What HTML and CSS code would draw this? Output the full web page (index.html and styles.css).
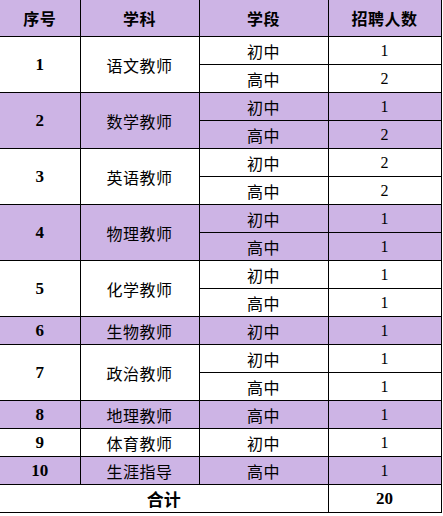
FILE: index.html
```html
<!DOCTYPE html>
<html lang="zh">
<head>
<meta charset="utf-8">
<link rel="stylesheet" href="styles.css">
</head>
<body>
<table class="recruit">
  <colgroup>
    <col class="c-no">
    <col class="c-subj">
    <col class="c-stage">
    <col class="c-count">
  </colgroup>
  <thead>
    <tr class="head">
      <th>序号</th><th>学科</th><th>学段</th><th>招聘人数</th>
    </tr>
  </thead>
  <tbody>
    <tr class="w"><td class="no" rowspan="2">1</td><td class="subj" rowspan="2">语文教师</td><td class="stage">初中</td><td class="num">1</td></tr>
    <tr class="w"><td class="stage">高中</td><td class="num">2</td></tr>
    <tr class="p"><td class="no" rowspan="2">2</td><td class="subj" rowspan="2">数学教师</td><td class="stage">初中</td><td class="num">1</td></tr>
    <tr class="p"><td class="stage">高中</td><td class="num">2</td></tr>
    <tr class="w"><td class="no" rowspan="2">3</td><td class="subj" rowspan="2">英语教师</td><td class="stage">初中</td><td class="num">2</td></tr>
    <tr class="w"><td class="stage">高中</td><td class="num">2</td></tr>
    <tr class="p"><td class="no" rowspan="2">4</td><td class="subj" rowspan="2">物理教师</td><td class="stage">初中</td><td class="num">1</td></tr>
    <tr class="p"><td class="stage">高中</td><td class="num">1</td></tr>
    <tr class="w"><td class="no" rowspan="2">5</td><td class="subj" rowspan="2">化学教师</td><td class="stage">初中</td><td class="num">1</td></tr>
    <tr class="w"><td class="stage">高中</td><td class="num">1</td></tr>
    <tr class="p"><td class="no">6</td><td class="subj">生物教师</td><td class="stage">初中</td><td class="num">1</td></tr>
    <tr class="w"><td class="no" rowspan="2">7</td><td class="subj" rowspan="2">政治教师</td><td class="stage">初中</td><td class="num">1</td></tr>
    <tr class="w"><td class="stage">高中</td><td class="num">1</td></tr>
    <tr class="p"><td class="no">8</td><td class="subj">地理教师</td><td class="stage">高中</td><td class="num">1</td></tr>
    <tr class="w"><td class="no">9</td><td class="subj">体育教师</td><td class="stage">初中</td><td class="num">1</td></tr>
    <tr class="p"><td class="no">10</td><td class="subj">生涯指导</td><td class="stage">高中</td><td class="num">1</td></tr>
    <tr class="w total"><td class="sum-label" colspan="3">合计</td><td class="sum">20</td></tr>
  </tbody>
</table>
</body>
</html>
```
FILE: styles.css
```css
html, body {
  margin: 0;
  padding: 0;
  background: #ffffff;
}

.recruit {
  border-collapse: collapse;
  table-layout: fixed;
  width: 441px;
  color: #000;
  font-family: "Noto Sans CJK SC", "Noto Sans", sans-serif;
  font-size: 16px;
}

.c-no { width: 80px; }
.c-subj { width: 119px; }
.c-stage { width: 129px; }
.c-count { width: 113px; }

.recruit th,
.recruit td {
  border: 1px solid #000;
  padding: 0;
  text-align: center;
  vertical-align: middle;
  line-height: 20px;
}

.recruit tr > :first-child {
  border-left: none;
}

.head th {
  border-top: none;
  height: 36px;
  background: #cdb4e5;
  font-weight: bold;
  font-size: 16px;
  letter-spacing: 0.5px;
}

.recruit tbody tr {
  height: 28px;
}

.p td {
  background: #cdb4e5;
}

.w td {
  background: #ffffff;
}

.no {
  font-family: "Liberation Serif", serif;
  font-weight: bold;
  font-size: 17px;
}

.num {
  font-family: "Liberation Serif", serif;
  font-size: 16px;
}

.subj,
.stage {
  font-weight: normal;
  letter-spacing: 0.5px;
}

.sum-label {
  font-weight: bold;
  font-size: 17px;
}

.sum {
  font-family: "Liberation Serif", serif;
  font-weight: bold;
  font-size: 17px;
}
```
